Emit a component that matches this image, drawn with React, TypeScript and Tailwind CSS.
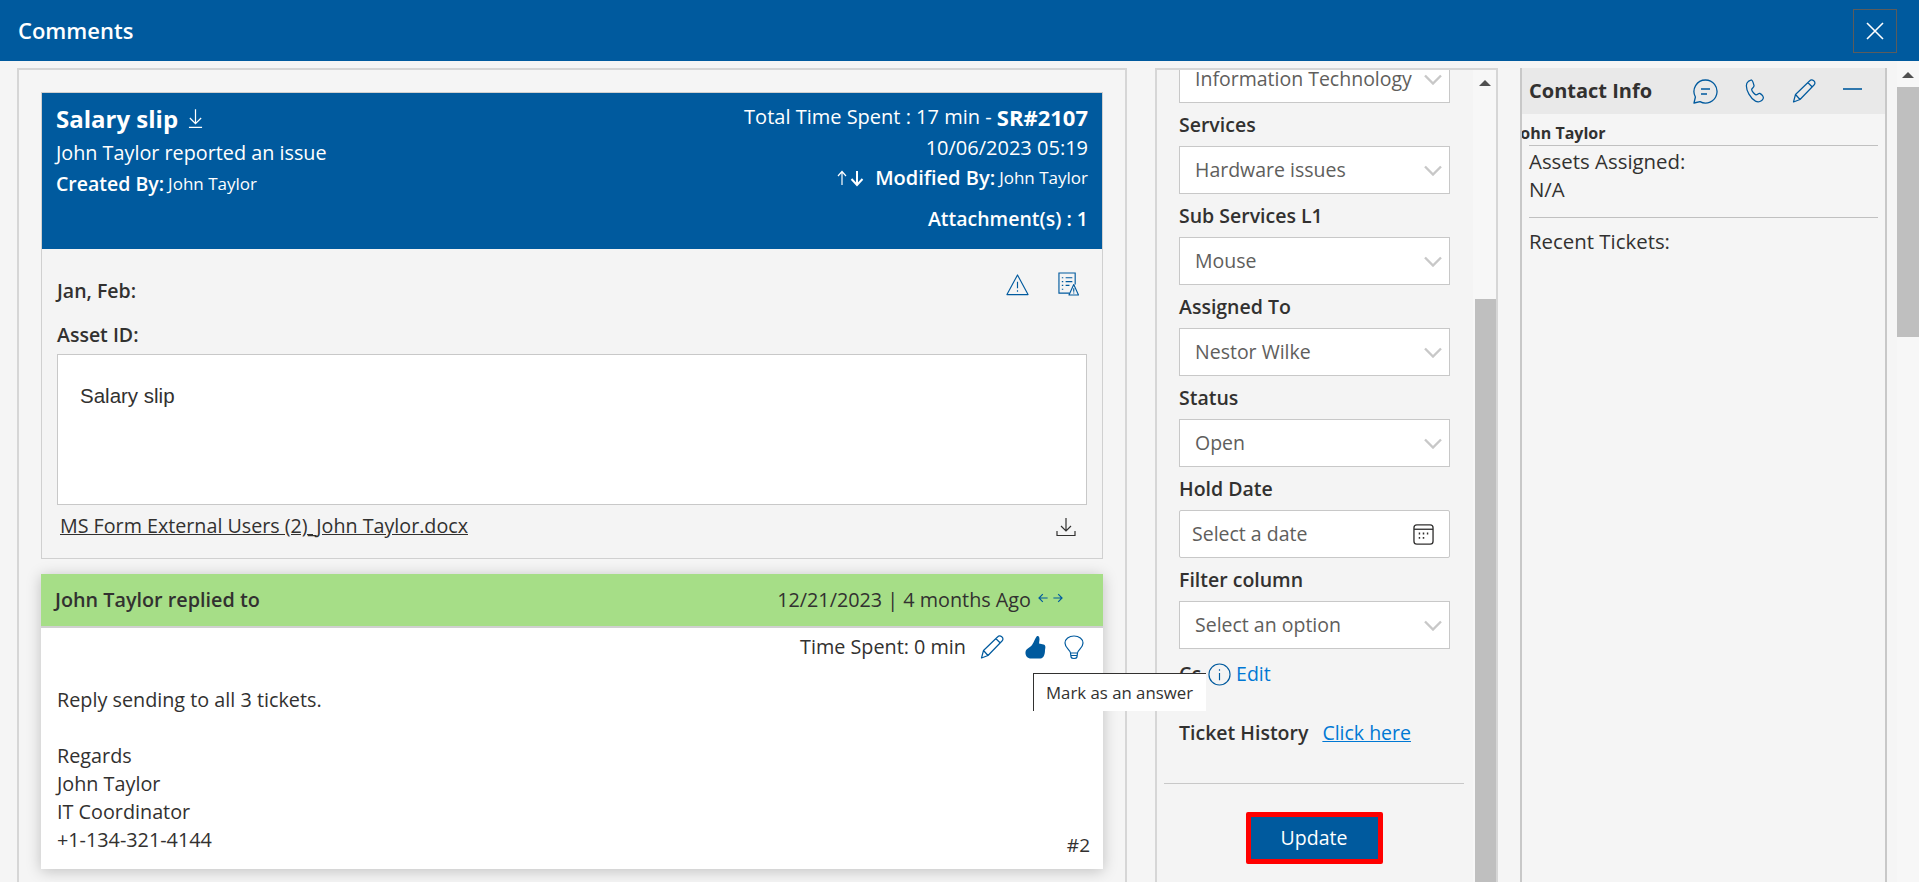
import React from 'react';

const font = { fontFamily: '"Open Sans", "Noto Sans", sans-serif' };

const PencilIcon = ({ className }: { className: string }) => (
  <svg viewBox="0 0 24 24" fill="none" stroke="currentColor" strokeWidth="1.2" className={className}>
    <path d="M1.5 23 L3.5 15.5 L17.5 2 A2.6 2.6 0 0 1 22 6 L8 20.5 Z M3.5 15.5 L8 20.5 M16 3.8 L20.3 8" strokeLinejoin="round" />
  </svg>
);

const Chevron = () => (
  <svg viewBox="0 0 18 10" fill="none" stroke="#c8c8c8" strokeWidth="2.4" className="w-[18px] h-[11px]">
    <path d="M1 1 L9 9 L17 1" />
  </svg>
);

const SelectBox = ({ value }: { value: string }) => (
  <div className="h-[48px] bg-white border border-[#c8c8c8] flex items-center justify-between pl-[15px] pr-[7px] text-[19.5px] text-[#605e5c] whitespace-nowrap">
    <span>{value}</span>
    <Chevron />
  </div>
);

const Label = ({ children }: { children: React.ReactNode }) => (
  <div className="h-[43px] flex items-center text-[19.5px] font-semibold text-[#323130]">{children}</div>
);

const ScrollArrow = () => <div className="w-0 h-0 border-x-[6px] border-x-transparent border-b-[6px] border-b-[#505050]" />;

export default function App() {
  return (
    <div style={font} className="h-[882px] w-[1919px] overflow-hidden bg-[#f5f5f5] flex flex-col text-[#323130]">
      {/* Header */}
      <header className="h-[61px] shrink-0 bg-[#005a9e] flex items-center justify-between pl-[18px] pr-[22px]">
        <h1 className="text-[22px] font-semibold text-white">Comments</h1>
        <button className="w-[44px] h-[44px] border border-[#5c5c5c] flex items-center justify-center text-white">
          <svg viewBox="0 0 18 18" stroke="currentColor" strokeWidth="1.6" className="w-[18px] h-[18px]">
            <path d="M1 1 L17 17 M17 1 L1 17" />
          </svg>
        </button>
      </header>

      <div className="flex-1 flex pt-[7px] pl-[17px]">
        {/* Ticket thread */}
        <section className="w-[1110px] shrink-0 border-l-2 border-t-2 border-r-2 border-[#d6d6d6] px-[22px] pt-[22px]">
          <div className="border border-[#d0d0d0]">
            <div className="h-[156px] bg-[#005a9e] text-white flex justify-between pl-[14px] pr-[14px] pt-[8px]">
              <div>
                <div className="flex items-center gap-[10px] text-[24px] font-bold h-[35px] mb-[2px]">
                  Salary slip
                  <svg viewBox="0 0 16 22" fill="none" stroke="currentColor" strokeWidth="1.3" className="w-[15px] h-[21px]">
                    <path d="M8 1 V16 M2 10.5 L8 16.5 L14 10.5 M1 20.5 H15" />
                  </svg>
                </div>
                <div className="h-[30px] flex items-center text-[19.8px]">John Taylor reported an issue</div>
                <div className="h-[32px] flex items-center gap-[4px] text-[19.5px] font-semibold">
                  Created By:<span className="text-[17px] font-normal">John Taylor</span>
                </div>
              </div>
              <div className="text-right">
                <div className="h-[30px] mt-[1px] flex items-center justify-end text-[20px]">
                  Total Time Spent : 17 min -&nbsp;<b className="text-[22px]">SR#2107</b>
                </div>
                <div className="h-[31px] flex items-center justify-end text-[20px]">10/06/2023 05:19</div>
                <div className="h-[30px] flex items-center justify-end gap-[9px] text-[20px] font-semibold">
                  <svg viewBox="0 0 30 18" fill="none" stroke="currentColor" className="w-[30px] h-[18px]">
                    <path d="M6 16 V3 M2 7 L6 2.5 L10 7" strokeWidth="1.2" />
                    <path d="M21 2 V15.5 M15.5 10 L21 16 L26.5 10" strokeWidth="2" />
                  </svg>
                  <span className="flex items-center gap-[4px]">Modified By:<span className="text-[17px] font-normal">John Taylor</span></span>
                </div>
                <div className="h-[52px] flex items-center justify-end text-[19.5px] font-semibold">Attachment(s) : 1</div>
              </div>
            </div>

            <div className="h-[309px] bg-[#f4f4f4] px-[15px] pt-[24px]">
              <div className="h-[36px] flex items-center justify-between pr-[8px]">
                <span className="text-[19.5px] font-semibold">Jan, Feb:</span>
                <div className="flex items-center gap-[29px] text-[#005a9e] -mt-[14px]">
                  <svg viewBox="0 0 24 24" fill="none" stroke="currentColor" strokeWidth="1.2" className="w-[23px] h-[23px]">
                    <path d="M12 2 L23 22.5 H1 Z M12 9 V16 M12 18 V19.5" strokeLinejoin="round" />
                  </svg>
                  <svg viewBox="0 0 22 25" fill="none" stroke="currentColor" strokeWidth="1.2" className="w-[21px] h-[24px]">
                    <path d="M12 22 H1 V1 H18 V13 M4 6 H5.5 M8 6 H15 M4 10 H5.5 M8 10 H15 M4 14 H5.5 M8 14 H12 M4 18 H5.5" />
                    <path d="M16.5 13 L21.5 24 H11.5 Z M16.5 17 V20.5 M16.5 21.5 V22.5" strokeLinejoin="round" />
                  </svg>
                </div>
              </div>
              <div className="h-[45px] pt-[6px] flex items-center text-[19.5px] font-semibold">Asset ID:</div>
              <div className="h-[151px] bg-white border border-[#c8c8c8] pl-[22px] pt-[28px] text-[20.5px] leading-[26px] text-[#323130] font-['Liberation_Sans',sans-serif]">
                Salary slip
              </div>
              <div className="h-[38px] pt-[3px] flex items-center justify-between pl-[3px] pr-[11px]">
                <a className="text-[19.7px] underline">MS Form External Users (2)_John Taylor.docx</a>
                <svg viewBox="0 0 20 20" fill="none" stroke="#323130" strokeWidth="1.2" className="mt-[3px] w-[20px] h-[20px]">
                  <path d="M10 1 V14 M5 9 L10 14 L15 9 M1 14 V18.5 H19 V14" />
                </svg>
              </div>
            </div>
          </div>

          {/* Reply card */}
          <article className="mt-[15px] bg-white shadow-[0_2px_14px_rgba(0,0,0,0.22)] h-[295px] relative">
            <div className="h-[54px] bg-[#a6de87] border-b-2 border-[#d0d0d0] flex items-center justify-between pl-[14px] pr-[40px]">
              <span className="text-[19.8px] font-semibold">John Taylor replied to</span>
              <div className="flex items-center gap-[7px]">
                <span className="text-[19.8px]">12/21/2023 | 4 months Ago</span>
                <svg viewBox="0 0 26 10" fill="none" stroke="#005a9e" strokeWidth="1.2" className="w-[25px] h-[10px] -mt-[4px]">
                  <path d="M1 5 H10 M5 1 L1 5 L5 9 M16 5 H25 M21 1 L25 5 L21 9" />
                </svg>
              </div>
            </div>
            <div className="h-[38px] flex items-center justify-end pr-[19px] text-[#005a9e]">
              <span className="text-[19.8px] text-[#323130] mr-[14px]">Time Spent: 0 min</span>
              <PencilIcon className="w-[24px] h-[24px]" />
              <div className="relative ml-[21px] w-[21px] h-[24px]">
                <svg viewBox="0 0 21 24" fill="currentColor" className="w-[21px] h-[24px]">
                  <path d="M12 1 C14 0.5 14.5 2.5 14.5 4.5 L14 8.5 L18.5 9.5 C21 10 20.5 13 20 15 C20 19 19 23 15.5 23.5 L7 23.5 C3 24 0 21 0.5 17 C1 13.5 5 13 7 10 C9 7.5 10 3 12 1 Z" />
                </svg>
                <div className="absolute z-50 left-[8px] top-[38px] w-[173px] h-[38px] bg-white border-t border-l border-[#323130] pl-[12px] flex items-center text-[16.8px] text-[#323130] whitespace-nowrap">
                  Mark as an answer
                </div>
              </div>
              <svg viewBox="0 0 20 25" fill="none" stroke="currentColor" strokeWidth="1.2" className="ml-[18px] w-[20px] h-[25px]">
                <path d="M6.5 18 C6 14.5 1 13 1 8 C1 4 5 1 10 1 C15 1 19 4 19 8 C19 13 14 14.5 13.5 18 Z M6.5 18 L7 22 C7.5 24 12.5 24 13 22 L13.5 18 M7 20.5 H13" />
              </svg>
            </div>
            <div className="pl-[16px] pt-[20px] text-[19.8px] leading-[28px]">
              <div>Reply sending to all 3 tickets.</div>
              <div className="h-[28px]" />
              <div>Regards</div>
              <div>John Taylor</div>
              <div>IT Coordinator</div>
              <div>+1-134-321-4144</div>
            </div>
            <span className="absolute right-[13px] bottom-[10px] text-[19px]">#2</span>
          </article>
        </section>

        {/* Ticket fields */}
        <section className="ml-[28px] w-[343px] shrink-0 border-x-2 border-t-2 border-[#d6d6d6] bg-[#f4f4f4] flex">
          <div className="w-[316px] shrink-0 flex flex-col overflow-hidden">
            <div className="pl-[22px] pr-[23px]">
              <div className="-mt-[15px]">
                <SelectBox value="Information Technology" />
              </div>
              <Label>Services</Label>
              <SelectBox value="Hardware issues" />
              <Label>Sub Services L1</Label>
              <SelectBox value="Mouse" />
              <Label>Assigned To</Label>
              <SelectBox value="Nestor Wilke" />
              <Label>Status</Label>
              <SelectBox value="Open" />
              <Label>Hold Date</Label>
              <div className="h-[48px] bg-white border border-[#c8c8c8] rounded-[2px] flex items-center justify-between pl-[12px] pr-[15px] text-[19.5px] text-[#605e5c]">
                <span>Select a date</span>
                <svg viewBox="0 0 22 22" fill="none" stroke="#323130" strokeWidth="1.4" className="w-[21px] h-[21px]">
                  <rect x="1" y="1" width="20" height="20" rx="3" />
                  <path d="M1 5.5 H21" />
                  <path d="M6 10 H7.5 M10.2 10 H11.8 M14.5 10 H16 M6 14.5 H7.5 M10.2 14.5 H11.8" strokeWidth="2" />
                </svg>
              </div>
              <Label>Filter column</Label>
              <SelectBox value="Select an option" />
              <div className="h-[50px] flex items-center text-[19.5px]">
                <span className="font-semibold">Cc</span>
                <svg viewBox="0 0 24 24" fill="none" stroke="#005a9e" strokeWidth="1.2" className="ml-[7px] w-[23px] h-[23px]">
                  <circle cx="12" cy="12" r="11" />
                  <path d="M12 10.5 V18 M12 6.5 V8.2" />
                </svg>
                <a className="ml-[5px] text-[#0078d4]">Edit</a>
              </div>
              <div className="h-[68px] flex items-center text-[19.5px]">
                <span className="font-semibold">Ticket History</span>
                <a className="ml-[14px] text-[#0078d4] underline">Click here</a>
              </div>
            </div>
            <div className="ml-[7px] mr-[9px] h-[1px] shrink-0 bg-[#c8c8c8] mt-[16px]" />
            <button className="self-center shrink-0 mt-[28px] mr-[2px] w-[137px] h-[52px] bg-[#005a9e] border-[5px] border-[#ff0000] rounded-[2px] text-[19.5px] text-white">
              Update
            </button>
          </div>
          <div className="flex-1 bg-[#f7f7f7] flex flex-col items-end">
            <div className="h-[229px] w-full flex justify-center pt-[10px]"><ScrollArrow /></div>
            <div className="flex-1 w-[21px] bg-[#bfbfbf]" />
          </div>
        </section>

        {/* Contact info */}
        <section className="ml-[22px] w-[367px] shrink-0 border-x-2 border-[#c8c8c8]">
          <div className="h-[46px] bg-[#e9e9e9] flex items-center justify-between pl-[7px] pr-[23px] text-[#005a9e]">
            <span className="text-[20px] font-bold text-[#323130]">Contact Info</span>
            <div className="flex items-center gap-[27px]">
              <svg viewBox="0 0 25 25" fill="none" stroke="currentColor" strokeWidth="1.3" className="w-[25px] h-[25px]">
                <path d="M12.5 1 A11.5 11.5 0 1 1 7 22.6 L1 24 L2.4 18 A11.5 11.5 0 0 1 12.5 1 Z M8 10 H17 M8 15 H14" strokeLinejoin="round" />
              </svg>
              <svg viewBox="0 0 20 25" fill="none" stroke="currentColor" strokeWidth="1.3" className="w-[20px] h-[24px]">
                <path d="M3 2.5 L6 1 C7.5 1 8.5 5 9 7 C9 9 6.5 9.5 6.5 11 C7 13 9.5 16 11 16.5 C13 16.5 13.5 14.5 15 15 C17 16 19.5 18.5 18.5 20.5 C17 23.5 13.5 24.5 10.5 23 C5 20 1 12 1 7 C1 5 1.5 3.5 3 2.5 Z" strokeLinejoin="round" />
              </svg>
              <PencilIcon className="w-[24px] h-[24px]" />
              <svg viewBox="0 0 19 2" stroke="currentColor" strokeWidth="1.6" className="w-[19px] h-[2px] -mt-[4px]">
                <path d="M0 1 H19" />
              </svg>
            </div>
          </div>
          <div className="overflow-hidden">
            <div className="h-[31px] flex items-end text-[16px] font-bold whitespace-nowrap">
              <span className="-ml-[7px] leading-[24px]">John Taylor</span>
            </div>
            <div className="mx-[7px] border-t border-[#c0c0c0] pt-[1px] h-[72px] text-[20.4px] leading-[28px]">
              <div>Assets Assigned:</div>
              <div>N/A</div>
            </div>
            <div className="mx-[7px] border-t border-[#c0c0c0] pt-[9px] text-[20.4px] leading-[28px]">Recent Tickets:</div>
          </div>
        </section>

        {/* Page scrollbar */}
        <div className="ml-[10px] w-[22px] shrink-0 -mt-[7px] pt-[8px] bg-[#f7f7f7] flex flex-col items-center">
          <div className="h-[18px] pt-[3px]"><ScrollArrow /></div>
          <div className="w-full h-[250px] bg-[#bfbfbf]" />
        </div>
      </div>
    </div>
  );
}
